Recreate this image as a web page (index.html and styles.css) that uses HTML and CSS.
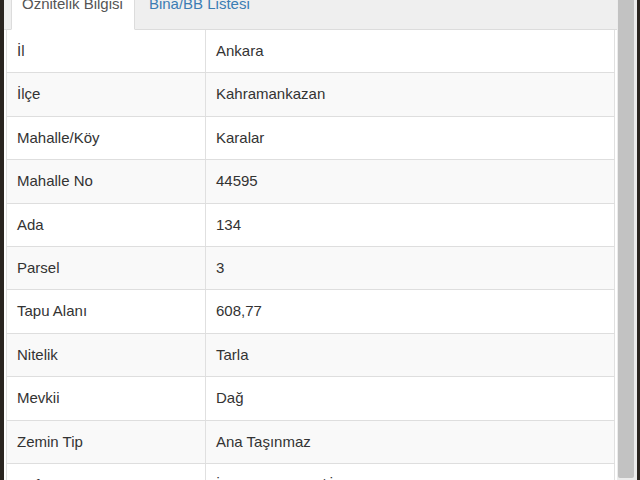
FILE: index.html
```html
<!DOCTYPE html>
<html lang="tr">
<head>
<meta charset="utf-8">
<title>Öznitelik Bilgisi</title>
<link rel="stylesheet" href="styles.css">
</head>
<body>
<div class="window">
  <div class="content">
    <ul class="tabs">
      <li class="tab active"><a>Öznitelik Bilgisi</a></li>
      <li class="tab"><a>Bina/BB Listesi</a></li>
    </ul>
    <table class="attr">
      <tbody>
        <tr><td class="key">İl</td><td>Ankara</td></tr>
        <tr><td class="key">İlçe</td><td>Kahramankazan</td></tr>
        <tr><td class="key">Mahalle/Köy</td><td>Karalar</td></tr>
        <tr><td class="key">Mahalle No</td><td>44595</td></tr>
        <tr><td class="key">Ada</td><td>134</td></tr>
        <tr><td class="key">Parsel</td><td>3</td></tr>
        <tr><td class="key">Tapu Alanı</td><td>608,77</td></tr>
        <tr><td class="key">Nitelik</td><td>Tarla</td></tr>
        <tr><td class="key">Mevkii</td><td>Dağ</td></tr>
        <tr><td class="key">Zemin Tip</td><td>Ana Taşınmaz</td></tr>
        <tr><td class="key">Pafta</td><td>İ29-B-17-D-2-A / İ29-B-17-D-2-B</td></tr>
      </tbody>
    </table>
  </div>
  <div class="scrollbar"><div class="thumb"></div></div>
</div>
</body>
</html>
```

FILE: styles.css
```css
html, body {
  margin: 0;
  padding: 0;
}
body {
  background: #2a2520;
  width: 640px;
  height: 480px;
  overflow: hidden;
  font-family: "Liberation Sans", Arial, sans-serif;
  font-size: 15px;
  color: #333;
}
.window {
  margin-left: 4px;
  width: 633px;
  height: 480px;
  background: #fff;
  display: flex;
  overflow: hidden;
}
.content {
  flex: 1;
  padding: 0 2px;
  margin-top: -12px;
}
.tabs {
  list-style: none;
  margin: 0 -2px;
  padding: 0 0 0 7px;
  height: 41px;
  background: #efefef;
  border-bottom: 1px solid #dcdcdc;
  display: flex;
  align-items: flex-end;
}
.tab {
  margin-right: 3px;
  margin-bottom: -1px;
}
.tab a {
  display: block;
  padding: 7px 11px 17px 10px;
  line-height: 17px;
  border: 1px solid transparent;
  color: #3b7db4;
}
.tab.active a {
  background: #fff;
  color: #555;
  border-color: #dcdcdc;
  border-bottom-color: #fff;
}
.attr {
  width: 609px;
  border-collapse: collapse;
  border-left: 1px solid #e0e0e0;
  border-right: 1px solid #e0e0e0;
}
.attr td {
  padding: 10px 10px;
  line-height: 22.4px;
  border-bottom: 1px solid #dedede;
  vertical-align: middle;
}
.attr td.key {
  width: 178px;
  border-right: 1px solid #e0e0e0;
}
.attr tr:nth-child(even) td {
  background: #f9f9f9;
}
.scrollbar {
  width: 20px;
  background: #ececec;
  display: flex;
  padding: 0 3px 2px 1px;
  box-sizing: border-box;
}
.thumb {
  flex: 1;
  background: #c2c2c2;
  border-radius: 0 0 2px 2px;
}
```
